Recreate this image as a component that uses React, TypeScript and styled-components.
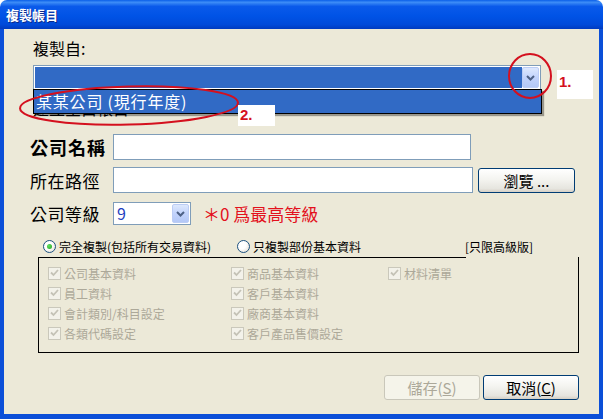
import React from 'react';
import styled, { createGlobalStyle } from 'styled-components';

const GlobalStyle = createGlobalStyle`
  *, *::before, *::after { box-sizing: border-box; }
  html, body { margin: 0; padding: 0; background: #fff; }
  body {
    font-family: "Noto Sans CJK TC", "Liberation Sans", sans-serif;
    color: #000;
  }
`;

const Window = styled.div`
  position: relative;
  width: 603px;
  height: 419px;
  display: flex;
  flex-direction: column;
  overflow: hidden;
`;

const TitleBar = styled.div`
  flex: none;
  height: 29px;
  border-radius: 7px 7px 0 0;
  background: linear-gradient(
    #0a5fe8 0%,
    #3d8df7 8%,
    #0a5aea 22%,
    #0053e6 55%,
    #004ad9 85%,
    #003bbf 100%
  );
  display: flex;
  align-items: center;
  padding-left: 6px;
  color: #fff;
  font-size: 13px;
  font-weight: bold;
  text-shadow: 1px 1px 0 #0b2a8a;
`;

const Body = styled.div`
  flex: 1;
  display: flex;
  flex-direction: column;
  background: #ece9d8;
  border-style: solid;
  border-color: #0b4fd8;
  border-width: 0 4px 5px 4px;
  padding: 0 20px 0 26px;
`;

const FieldLabel = styled.div`
  margin: 10px 0 0 3px;
  height: 18px;
  font-size: 16px;
  line-height: 18px;
`;

const ComboWrap = styled.div<{ $w: number; $h: number; $mt?: number }>`
  position: relative;
  display: flex;
  width: ${({ $w }) => $w}px;
  height: ${({ $h }) => $h}px;
  margin-top: ${({ $mt }) => $mt ?? 0}px;
  border: 1px solid #7f9db9;
  background: #fff;
  padding: 1px;
`;

const MainCombo = styled(ComboWrap)`
  margin-left: 3px;
`;

const ComboValue = styled.div<{ $selected?: boolean }>`
  flex: 1;
  background: ${({ $selected }) => ($selected ? '#316ac5' : '#fff')};
  color: #1f3fbf;
  font-size: 16px;
  line-height: 19px;
  padding-left: 2px;
`;

const DropButton = styled.div`
  flex: none;
  width: 17px;
  display: flex;
  align-items: center;
  justify-content: center;
  border: 1px solid #bccdf5;
  border-radius: 2px;
  background: linear-gradient(#dde8fd, #c2d3fc 50%, #b4c8f6);
`;

const DropList = styled.div`
  position: absolute;
  z-index: 2;
  top: 100%;
  left: -1px;
  width: 509px;
  height: 25px;
  border: 1px solid #000;
  background: #316ac5;
  color: #fff;
  font-size: 16px;
  letter-spacing: 0.8px;
  line-height: 22px;
  padding-left: 2px;
  box-shadow: 2px 2px 1px rgba(0, 0, 0, 0.35);
`;

const CoveredLabel = styled.div`
  margin: 8px 0 0 3px;
  height: 20px;
  font-size: 16px;
  line-height: 20px;
`;

const FormRow = styled.div<{ $mt: number; $h: number }>`
  display: flex;
  align-items: center;
  margin-top: ${({ $mt }) => $mt}px;
  height: ${({ $h }) => $h}px;
`;

const RowLabel = styled.div<{ $bold?: boolean }>`
  flex: none;
  width: 83px;
  font-size: ${({ $bold }) => ($bold ? 18 : 17)}px;
  font-weight: ${({ $bold }) => ($bold ? 'bold' : 'normal')};
  letter-spacing: ${({ $bold }) => ($bold ? 1 : 0.5)}px;
`;

const TextBox = styled.div<{ $w: number }>`
  flex: none;
  width: ${({ $w }) => $w}px;
  height: 26px;
  border: 1px solid #7f9db9;
  background: #fff;
`;

const XpButton = styled.div<{ $w: number; $disabled?: boolean }>`
  flex: none;
  width: ${({ $w }) => $w}px;
  height: 25px;
  display: flex;
  align-items: center;
  justify-content: center;
  border: 1px solid ${({ $disabled }) => ($disabled ? '#c9c7ba' : '#003c74')};
  border-radius: 3px;
  background: ${({ $disabled }) =>
    $disabled ? '#f5f4ea' : 'linear-gradient(#ffffff, #f4f4f0 45%, #e6e5df 85%, #d6d0c5)'};
  color: ${({ $disabled }) => ($disabled ? '#aca899' : '#000')};
  font-size: 15px;
  u { text-decoration: underline; }
`;

const BrowseButton = styled(XpButton)`
  margin-left: 5px;
`;

const Hint = styled.div`
  margin-left: 12px;
  color: #e3101c;
  font-size: 17px;
`;

const RadioRow = styled.div`
  display: grid;
  grid-template-columns: 194px 228px auto;
  align-items: center;
  margin: 12px 0 0 13px;
  height: 18px;
  font-size: 12px;
`;

const RadioItem = styled.div`
  display: flex;
  align-items: center;
  gap: 3px;
`;

const RadioDot = styled.span<{ $on?: boolean }>`
  width: 13px;
  height: 13px;
  border-radius: 50%;
  border: 1px solid #1c5180;
  background: radial-gradient(circle at 35% 35%, #fff 40%, #dcd7cb);
  display: flex;
  align-items: center;
  justify-content: center;
  &::after {
    content: '';
    display: ${({ $on }) => ($on ? 'block' : 'none')};
    width: 5px;
    height: 5px;
    border-radius: 50%;
    background: radial-gradient(circle at 35% 35%, #5fe05f, #21a121);
  }
`;

const Edition = styled.div`
  font-size: 12px;
`;

const Group = styled.div`
  position: relative;
  margin: 2px 0 0 8px;
  width: 541px;
  height: 96px;
  border: solid #000;
  border-width: 0 1px 1px 1px;
  &::before {
    content: '';
    position: absolute;
    top: 0;
    left: -1px;
    width: 428px;
    border-top: 1px solid #000;
  }
`;

const CheckGrid = styled.div`
  display: grid;
  grid-template-rows: repeat(4, 20px);
  grid-template-columns: 183px 157px auto;
  grid-auto-flow: column;
  padding: 6px 0 0 9px;
`;

const CheckItem = styled.div`
  display: flex;
  align-items: center;
  gap: 3px;
  font-size: 12px;
  color: #aca899;
`;

const CheckBox = styled.span`
  width: 13px;
  height: 13px;
  border: 1px solid #cac8bb;
  background: #f3f2ea;
  display: flex;
  align-items: center;
  justify-content: center;
`;

const ButtonRow = styled.div`
  display: flex;
  justify-content: flex-end;
  gap: 3px;
  margin-top: 22px;
`;

const Overlay = styled.svg`
  position: absolute;
  left: 0;
  top: 0;
  width: 603px;
  height: 419px;
  pointer-events: none;
  z-index: 3;
`;

const Tag = styled.div<{ $x: number; $y: number; $w: number; $h: number }>`
  position: absolute;
  z-index: 4;
  left: ${({ $x }) => $x}px;
  top: ${({ $y }) => $y}px;
  width: ${({ $w }) => $w}px;
  height: ${({ $h }) => $h}px;
  background: #fff;
  color: #d4101e;
  font-family: "Liberation Sans", Arial, sans-serif;
  font-weight: bold;
  font-size: 15px;
  padding: ${({ $h }) => ($h > 25 ? 3 : 1)}px 0 0 2px;
`;

const Chevron = () => (
  <svg width="9" height="6" viewBox="0 0 9 6">
    <path d="M1 1 L4.5 4.5 L8 1" fill="none" stroke="#4d6185" strokeWidth="2" />
  </svg>
);

const Tick = () => (
  <svg width="9" height="8" viewBox="0 0 9 8">
    <path d="M1 3.5 L3.5 6 L8 1" fill="none" stroke="#c4c2b6" strokeWidth="1.8" />
  </svg>
);

const options = [
  '公司基本資料',
  '員工資料',
  '會計類別/科目設定',
  '各類代碼設定',
  '商品基本資料',
  '客戶基本資料',
  '廠商基本資料',
  '客戶產品售價設定',
  '材料清單',
];

export default function App() {
  return (
    <>
      <GlobalStyle />
      <Window>
        <TitleBar>複製帳目</TitleBar>
        <Body>
          <FieldLabel>複製自:</FieldLabel>
          <MainCombo $w={508} $h={25} $mt={8}>
            <ComboValue $selected />
            <DropButton>
              <Chevron />
            </DropButton>
            <DropList>某某公司 (現行年度)</DropList>
          </MainCombo>
          <CoveredLabel>建立空白帳目</CoveredLabel>

          <FormRow $mt={16} $h={26}>
            <RowLabel $bold>公司名稱</RowLabel>
            <TextBox $w={358} />
          </FormRow>
          <FormRow $mt={7} $h={26}>
            <RowLabel>所在路徑</RowLabel>
            <TextBox $w={360} />
            <BrowseButton $w={97}>瀏覽 ...</BrowseButton>
          </FormRow>
          <FormRow $mt={9} $h={23}>
            <RowLabel>公司等級</RowLabel>
            <ComboWrap $w={78} $h={23}>
              <ComboValue>9</ComboValue>
              <DropButton>
                <Chevron />
              </DropButton>
            </ComboWrap>
            <Hint>＊0 爲最高等級</Hint>
          </FormRow>

          <RadioRow>
            <RadioItem>
              <RadioDot $on />
              完全複製(包括所有交易資料)
            </RadioItem>
            <RadioItem>
              <RadioDot />
              只複製部份基本資料
            </RadioItem>
            <Edition>[只限高級版]</Edition>
          </RadioRow>
          <Group>
            <CheckGrid>
              {options.map((o) => (
                <CheckItem key={o}>
                  <CheckBox>
                    <Tick />
                  </CheckBox>
                  {o}
                </CheckItem>
              ))}
            </CheckGrid>
          </Group>

          <ButtonRow>
            <XpButton $w={96} $disabled>
              儲存(<u>S</u>)
            </XpButton>
            <XpButton $w={96}>
              取消(<u>C</u>)
            </XpButton>
          </ButtonRow>
        </Body>

        <Overlay viewBox="0 0 603 419">
          <ellipse cx="530" cy="76" rx="21" ry="22" fill="none" stroke="#d4101e" strokeWidth="2" />
          <ellipse
            cx="129"
            cy="105.5"
            rx="109"
            ry="19"
            fill="none"
            stroke="#d4101e"
            strokeWidth="2"
            transform="rotate(-1.5 129 105.5)"
          />
        </Overlay>
        <Tag $x={557} $y={70} $w={36} $h={29}>
          1.
        </Tag>
        <Tag $x={238} $y={105} $w={37} $h={21}>
          2.
        </Tag>
      </Window>
    </>
  );
}
